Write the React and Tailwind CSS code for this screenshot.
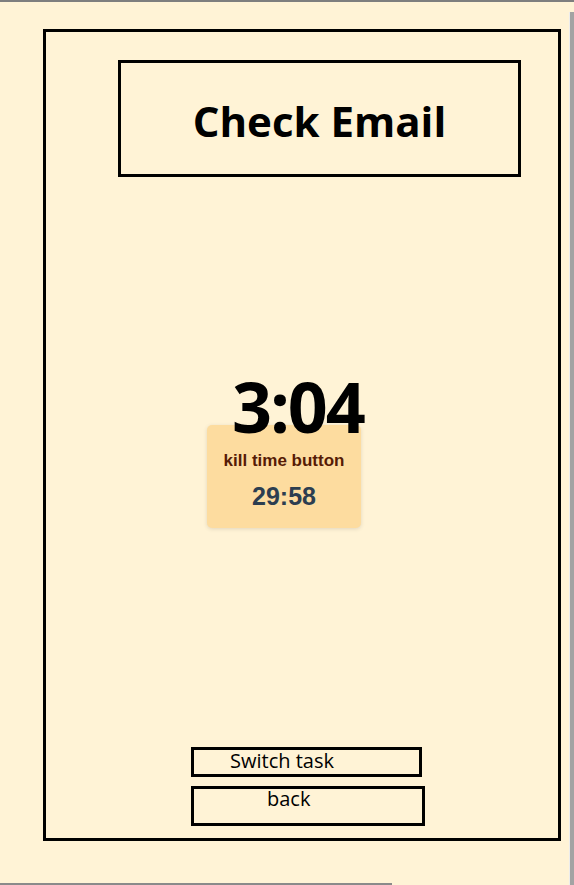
export default function App() {
  return (
    <div className="relative h-[885px] w-[574px] overflow-hidden border-t-2 border-[#7e7e7e] bg-[#fff3d6] pt-[27px] pl-[43px]">
      {/* wireframe frame */}
      <div className="box-border flex h-[812px] w-[518px] flex-col border-[3px] border-black">
        <div className="ml-[72px] mt-[28px] box-border flex h-[117px] w-[403px] items-center justify-center border-[3px] border-black">
          <h1 className="mt-[5px] font-['Open_Sans',sans-serif] text-[42px] font-bold leading-none text-black">
            Check Email
          </h1>
        </div>

        <div className="relative z-10 ml-[186px] mt-[194px] font-['Open_Sans',sans-serif] text-[70px] font-bold leading-none tracking-[-0.03em] text-black">
          3:04
        </div>

        <div className="-mt-[16px] ml-[161px] flex h-[103px] w-[154px] flex-col items-center rounded-[5px] bg-[#fddc9f] pt-[27px] shadow-[0_1px_4px_rgba(0,0,0,0.12)] font-['Liberation_Sans',Arial,sans-serif]">
          <p className="text-[17px] font-bold leading-none text-[#561b05]">
            kill time button
          </p>
          <p className="mt-[15px] text-[25px] font-bold leading-none text-[#2c3e50]">
            29:58
          </p>
        </div>

        <div className="mt-auto mb-[12px] ml-[145px] flex flex-col gap-[9px] font-['Open_Sans',sans-serif] text-[20px] leading-none text-black">
          <button className="box-border flex h-[30px] w-[231px] items-start border-[3px] border-black pt-[1px] pl-[36px]">
            Switch task
          </button>
          <button className="box-border flex h-[40px] w-[234px] items-start border-[3px] border-black pl-[73px]">
            back
          </button>
        </div>
      </div>

      {/* window chrome edges */}
      <div className="absolute right-0 top-[10px] bottom-0 w-[5px] border-l border-[#ececec] bg-[#a3a3a3]" />
      <div className="absolute bottom-0 left-0 h-[2px] w-[392px] bg-[#8a8a8a]" />
    </div>
  );
}
